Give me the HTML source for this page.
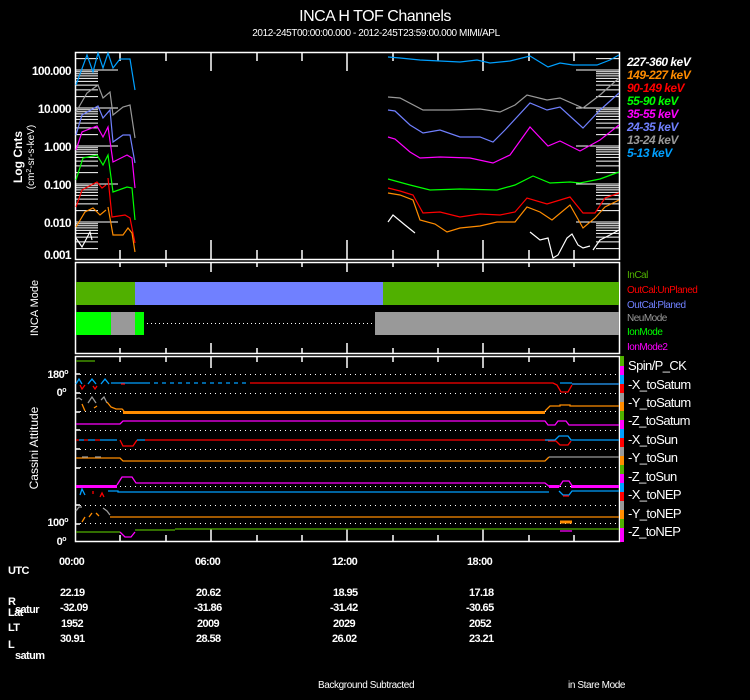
<!DOCTYPE html>
<html><head><meta charset="utf-8"><style>
html,body{margin:0;padding:0;background:#000;}
svg{display:block;}
text{font-family:"Liberation Sans",sans-serif;fill:#fff;}
</style></head><body>
<svg width="750" height="700" viewBox="0 0 750 700" xmlns="http://www.w3.org/2000/svg">
<rect width="750" height="700" fill="#000"/>
<text x="375" y="21" font-size="16" text-anchor="middle" letter-spacing="-0.5">INCA H TOF Channels</text>
<text x="376" y="36" font-size="10" text-anchor="middle" letter-spacing="-0.4">2012-245T00:00:00.000 - 2012-245T23:59:00.000 MIMI/APL</text>

<!-- Panel 1 -->
<rect x="75.5" y="52.5" width="544" height="207" fill="none" stroke="#fff" stroke-width="1.5"/>
<g stroke="#fff" stroke-width="1.5">
<path d="M120 52v9M166 52v9M211 52v19M257 52v9M302 52v9M347 52v19M393 52v9M438 52v9M483 52v19M529 52v9M574 52v9
M120 259v-9M166 259v-9M211 259v-19M257 259v-9M302 259v-9M347 259v-19M393 259v-9M438 259v-9M483 259v-19M529 259v-9M574 259v-9"/>
</g>
<g id="ylt" stroke="#fff" stroke-width="1">
<path d="M75 70h43M75 108h43M75 146h43M75 184h43M75 222h43"/>
<path d="M75 58.6h23M75 96.6h23M75 89.9h23M75 85.1h23M75 81.4h23M75 78.4h23M75 75.9h23M75 73.7h23M75 71.7h23
M75 134.6h23M75 127.9h23M75 123.1h23M75 119.4h23M75 116.4h23M75 113.9h23M75 111.7h23M75 109.7h23
M75 172.6h23M75 165.9h23M75 161.1h23M75 157.4h23M75 154.4h23M75 151.9h23M75 149.7h23M75 147.7h23
M75 210.6h23M75 203.9h23M75 199.1h23M75 195.4h23M75 192.4h23M75 189.9h23M75 187.7h23M75 185.7h23
M75 248.6h23M75 241.9h23M75 237.1h23M75 233.4h23M75 230.4h23M75 227.9h23M75 225.7h23M75 223.7h23"/>
</g>
<use href="#ylt" transform="translate(694,0) scale(-1,1)"/>
<g font-size="12" font-weight="bold" text-anchor="end" letter-spacing="-0.6">
<text x="71" y="75">100.000</text>
<text x="71" y="113">10.000</text>
<text x="71" y="151">1.000</text>
<text x="71" y="189">0.100</text>
<text x="71" y="227">0.010</text>
<text x="71" y="259">0.001</text>
</g>
<text transform="translate(22,157) rotate(-90)" font-size="12" font-weight="bold" text-anchor="middle">Log Cnts</text>
<text transform="translate(34,157) rotate(-90)" font-size="10" text-anchor="middle">(cm<tspan dy="-3" font-size="7">2</tspan><tspan dy="3">-sr-s-keV)</tspan></text>

<g fill="none" stroke-width="1.2">
<polyline stroke="#00a0ff" points="76,85 87,55 93,72 98,53 103,68 108,53 113,68 120,59 130,59 135,90"/>
<polyline stroke="#00a0ff" points="388,57 400,58 420,60 440,61 460,62 477,60 490,63 510,61 530,56 548,67 560,63 573,65 597,65 610,60 619,55"/>
<polyline stroke="#999" points="76,112 87,93 98,85 103,98 110,92 113,115 123,107 130,105 135,138"/>
<polyline stroke="#999" points="388,97 400,98 423,110 450,110 480,109 500,112 515,105 527,95 547,100 560,98 583,108 600,95 619,78"/>
<polyline stroke="#7080ff" points="76,135 82,115 98,106 103,118 110,110 113,142 123,135 130,135 135,163"/>
<polyline stroke="#7080ff" points="388,110 395,111 410,125 423,133 440,130 460,137 480,137 493,142 505,130 530,103 547,110 560,107 583,128 600,110 619,93"/>
<polyline stroke="#ff00ff" points="76,150 82,132 97,126 103,137 108,127 113,162 127,155 132,158 135,188"/>
<polyline stroke="#ff00ff" points="388,137 395,139 410,152 420,158 440,157 470,158 493,163 510,155 530,127 548,146 560,141 580,151 600,140 619,125"/>
<polyline stroke="#00ff00" points="76,180 83,158 97,155 103,165 108,155 113,192 127,187 132,188 135,220"/>
<polyline stroke="#00ff00" points="388,179 410,185 430,190 460,189 497,190 515,185 533,176 550,183 570,182 580,183 600,179 619,172"/>
<polyline stroke="#ff0000" points="76,207 82,190 97,182 102,188 106,185"/>
<polyline stroke="#ff0000" points="108,178 112,217 125,215 130,218 135,243"/>
<polyline stroke="#ff0000" points="388,188 400,191 413,195 423,213 440,212 460,217 480,214 500,215 515,212 527,198 547,204 570,197 583,213 595,213 605,198 619,193"/>
<polyline stroke="#ff8c00" points="76,227 85,212 93,208 100,215 106,210"/>
<polyline stroke="#ff8c00" points="108,207 113,235 123,235 128,228 132,233 135,252"/>
<polyline stroke="#ff8c00" points="388,193 400,195 413,200 420,220 435,224 447,232 460,228 480,226 497,222 515,222 527,207 540,212 552,220 570,205 583,228 595,218 605,207 619,200"/>
<polyline stroke="#fff" points="76,238 82,247 90,232 92,240"/>
<polyline stroke="#fff" points="388,222 393,215 405,225 415,233"/>
<polyline stroke="#fff" points="530,232 540,240 548,238 553,258 558,255 567,238 572,234 578,245 583,248 590,246"/>
<polyline stroke="#fff" points="593,250 600,240 610,235 619,230"/>
</g>
<g font-size="12" font-weight="bold" font-style="italic" letter-spacing="-0.5">
<text x="627" y="66" fill="#fff">227-360 keV</text>
<text x="627" y="79" fill="#ff8c00" style="fill:#ff8c00">149-227 keV</text>
<text x="627" y="92" style="fill:#ff0000">90-149 keV</text>
<text x="627" y="105" style="fill:#00ff00">55-90 keV</text>
<text x="627" y="118" style="fill:#ff00ff">35-55 keV</text>
<text x="627" y="131" style="fill:#7080ff">24-35 keV</text>
<text x="627" y="144" style="fill:#999">13-24 keV</text>
<text x="627" y="157" style="fill:#00a0ff">5-13 keV</text>
</g>

<!-- Panel 2 -->
<rect x="75.5" y="262.5" width="544" height="91" fill="none" stroke="#fff" stroke-width="1.5"/>
<path stroke="#fff" stroke-width="1.5" d="M120 262v5M166 262v5M211 262v10M257 262v5M302 262v5M347 262v10M393 262v5M438 262v5M483 262v10M529 262v5M574 262v5
M120 353v-5M166 353v-5M211 353v-10M257 353v-5M302 353v-5M347 353v-10M393 353v-5M438 353v-5M483 353v-10M529 353v-5M574 353v-5"/>
<rect x="76" y="282" width="59" height="23" fill="#50b000"/>
<rect x="135" y="282" width="248" height="23" fill="#7080ff"/>
<rect x="383" y="282" width="236" height="23" fill="#50b000"/>
<rect x="76" y="312" width="35" height="23" fill="#00ff00"/>
<rect x="111" y="312" width="24" height="23" fill="#999"/>
<rect x="135" y="312" width="9" height="23" fill="#00ff00"/>
<line x1="147" y1="323.5" x2="375" y2="323.5" stroke="#fff" stroke-dasharray="1,3"/>
<rect x="375" y="312" width="244" height="23" fill="#999"/>
<text transform="translate(38,308) rotate(-90)" font-size="11" text-anchor="middle">INCA Mode</text>
<g font-size="10" letter-spacing="-0.5">
<text x="627" y="278" style="fill:#50b000">InCal</text>
<text x="627" y="293" style="fill:#ff0000">OutCal:UnPlaned</text>
<text x="627" y="308" style="fill:#7080ff">OutCal:Planed</text>
<text x="627" y="321" style="fill:#999">NeuMode</text>
<text x="627" y="335" style="fill:#00ff00">IonMode</text>
<text x="627" y="350" style="fill:#ff00ff">IonMode2</text>
</g>

<!-- Panel 3 -->
<rect x="75.5" y="356.5" width="544" height="185" fill="none" stroke="#fff" stroke-width="1.5"/>
<path stroke="#fff" stroke-width="1.5" d="M120 356v6M166 356v6M211 356v12M257 356v6M302 356v6M347 356v12M393 356v6M438 356v6M483 356v12M529 356v6M574 356v6
M120 541v-6M166 541v-6M211 541v-12M257 541v-6M302 541v-6M347 541v-12M393 541v-6M438 541v-6M483 541v-12M529 541v-6M574 541v-6
M75 374h5M75 393h5M75 412h5M75 430h5M75 449h5M75 468h5M75 486h5M75 505h5M75 524h5"/>
<g stroke="#fff" stroke-dasharray="1,4" stroke-width="1">
<path d="M80 374.5H619M80 393.5H619M80 411.5H619M80 430.5H619M80 449.5H619M80 467.5H619M80 486.5H619M80 505.5H619M80 523.5H619"/>
</g>
<g fill="none" stroke-width="1.3">
<path stroke="#50b000" d="M76 361H95"/>
<path stroke="#00a0ff" d="M76 384l3-5 3 5M88 384l4-5 4 5M101 384l4-5 4 5M111 383H146"/>
<path stroke="#ff0000" d="M80 385l2 4 3-4M93 386l2 3 2-3M121 384h4"/>
<path stroke="#00a0ff" stroke-dasharray="4,4" d="M146 383H250"/>
<path stroke="#ff0000" d="M250 383H545M545 383h8l4 2 4 7h7l4-7M572 384H619" />
<path stroke="#00a0ff" d="M560 383h12M572 384H619"/>
<path stroke="#999" d="M76 399l3-1 3 2M88 403l4-6 4 6M101 400l3-3 3 6"/>
<path stroke="#ff8c00" d="M82 404l3 7M94 408l3-2M107 402l4 5 5 2h6l2 2"/>
<path stroke="#ff8c00" stroke-width="3" d="M123 412.5H545"/>
<path stroke="#ff8c00" d="M545 411l5-5h10v-1h10v1H619"/>
<path stroke="#ff00ff" d="M76 424H120l3-3H545l3 4h7l3-4h8l3 4H619"/>
<path stroke="#ff0000" d="M76 440h3M84 440h4M95 440h5M120 440l3 6h10l4-6M145 440H545l4 0M548 441h8l4 4h8l3-4"/>
<path stroke="#00a0ff" d="M79 440h5M88 440h7M100 440h17M137 440h8M545 440h10l4-4h9l3 4H619"/>
<path stroke="#ff8c00" d="M76 458H120l3 3H545l4-4"/>
<path stroke="#999" d="M82 457h6M95 457h6M549 457H619"/>
<path stroke="#ff00ff" stroke-width="3" d="M76 486.5H117"/>
<path stroke="#ff00ff" d="M117 485l5-8h10l4 6H545l5 4"/>
<path stroke="#ff00ff" stroke-width="3" d="M549 486.5h10M571 486.5H619"/>
<path stroke="#ff00ff" d="M559 487l4-6h6l4 6"/>
<path stroke="#00a0ff" d="M80 495l2-6 3 6M108 491h10v1H545h4M559 491l4 4h6l3-4H619"/>
<path stroke="#ff0000" d="M93 494v-3M100 497l2-4 2 4M563 496h6"/>
<path stroke="#999" d="M76 511l3-4 3 0M103 508l4 3 3 4"/>
<path stroke="#ff8c00" d="M82 522l3-5M89 517l3-4M96 513l3 3M110 517h25H619" />
<path stroke="#ff8c00" stroke-width="3" d="M560 522h12"/>
<path stroke="#50b000" d="M76 532H120M135 530H175M175 529H619"/>
<path stroke="#ff00ff" d="M120 532l5 5h6l4-5M560 531h12"/>
</g>
<g>
<rect x="620" y="356" width="4" height="10" fill="#50b000"/>
<rect x="620" y="366" width="4" height="9" fill="#ff00ff"/>
<rect x="620" y="375" width="4" height="9" fill="#00a0ff"/>
<rect x="620" y="384" width="4" height="9" fill="#ff0000"/>
<rect x="620" y="393" width="4" height="9" fill="#999"/>
<rect x="620" y="402" width="4" height="9" fill="#ff8c00"/>
<rect x="620" y="411" width="4" height="9" fill="#50b000"/>
<rect x="620" y="420" width="4" height="9" fill="#ff00ff"/>
<rect x="620" y="429" width="4" height="9" fill="#00a0ff"/>
<rect x="620" y="438" width="4" height="9" fill="#ff0000"/>
<rect x="620" y="447" width="4" height="9" fill="#999"/>
<rect x="620" y="456" width="4" height="9" fill="#ff8c00"/>
<rect x="620" y="465" width="4" height="9" fill="#50b000"/>
<rect x="620" y="474" width="4" height="9" fill="#ff00ff"/>
<rect x="620" y="483" width="4" height="9" fill="#00a0ff"/>
<rect x="620" y="492" width="4" height="9" fill="#ff0000"/>
<rect x="620" y="501" width="4" height="9" fill="#999"/>
<rect x="620" y="510" width="4" height="9" fill="#ff8c00"/>
<rect x="620" y="519" width="4" height="9" fill="#50b000"/>
<rect x="620" y="528" width="4" height="14" fill="#ff00ff"/>
</g>
<g font-size="13" letter-spacing="-0.6">
<text x="628" y="370">Spin/P_CK</text>
<text x="628" y="389">-X_toSatum</text>
<text x="628" y="407">-Y_toSatum</text>
<text x="628" y="425">-Z_toSatum</text>
<text x="628" y="444">-X_toSun</text>
<text x="628" y="462">-Y_toSun</text>
<text x="628" y="481">-Z_toSun</text>
<text x="628" y="499">-X_toNEP</text>
<text x="628" y="518">-Y_toNEP</text>
<text x="628" y="536">-Z_toNEP</text>
</g>
<g font-size="11" font-weight="bold" letter-spacing="-0.5" text-anchor="end">
<text x="68" y="378">180<tspan dy="-4" font-size="7">o</tspan></text>
<text x="66" y="396">0<tspan dy="-4" font-size="7">o</tspan></text>
<text x="68" y="526">100<tspan dy="-4" font-size="7">o</tspan></text>
<text x="66" y="545">0<tspan dy="-4" font-size="7">o</tspan></text>
</g>
<text transform="translate(38,448) rotate(-90)" font-size="12" text-anchor="middle">Cassini Attitude</text>

<!-- Bottom table -->
<g font-size="11" font-weight="bold" letter-spacing="-0.6">
<text x="59" y="565">00:00</text>
<text x="195" y="565">06:00</text>
<text x="332" y="565">12:00</text>
<text x="467" y="565">18:00</text>
<text x="8" y="574">UTC</text>
<text x="60" y="596">22.19</text><text x="196" y="596">20.62</text><text x="333" y="596">18.95</text><text x="469" y="596">17.18</text>
<text x="60" y="611">-32.09</text><text x="194" y="611">-31.86</text><text x="330" y="611">-31.42</text><text x="466" y="611">-30.65</text>
<text x="61" y="627">1952</text><text x="197" y="627">2009</text><text x="333" y="627">2029</text><text x="469" y="627">2052</text>
<text x="60" y="642">30.91</text><text x="196" y="642">28.58</text><text x="332" y="642">26.02</text><text x="469" y="642">23.21</text>
<text x="8" y="605">R</text>
<text x="15" y="613">satur</text>
<text x="8" y="616">Lat</text>
<text x="8" y="631">LT</text>
<text x="8" y="648">L</text>
<text x="15" y="659">satum</text>
</g>
<g font-size="10" letter-spacing="-0.4">
<text x="318" y="688">Background Subtracted</text>
<text x="568" y="688">in Stare Mode</text>
</g>
</svg>
</body></html>
